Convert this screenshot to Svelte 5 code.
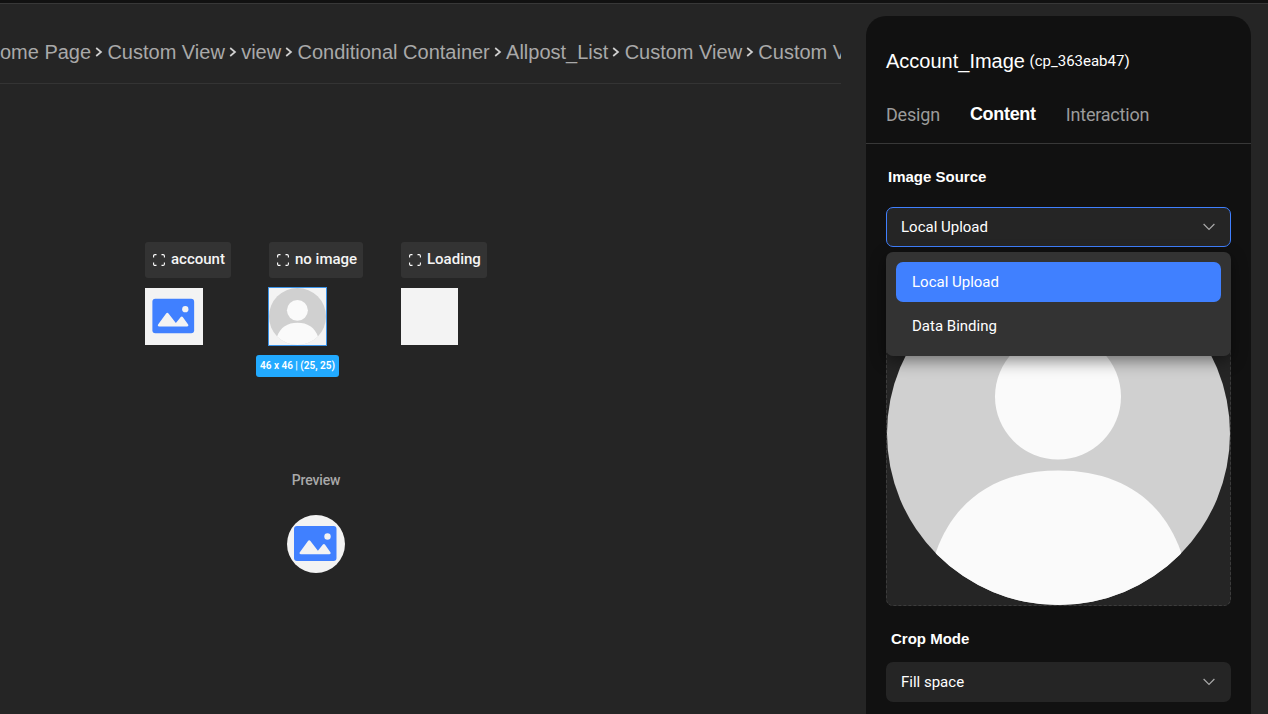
<script>
  const crumbs = ['Home Page', 'Custom View', 'view', 'Conditional Container', 'Allpost_List', 'Custom View', 'Custom View'];
  const variants = [
    { label: 'account', kind: 'picture', width: 86 },
    { label: 'no image', kind: 'avatar', width: 94 },
    { label: 'Loading', kind: 'blank', width: 86 }
  ];
  const options = ['Local Upload', 'Data Binding'];
  let source = $state('Local Upload');
</script>

{#snippet picture()}
  <svg class="art" viewBox="0 0 58 58">
    <rect x="7" y="11" width="42.5" height="35" rx="3" fill="#4080ff" />
    <path d="M14 39.2c-1.6 0-1.8-1.2-1-2.3l8-11c.7-.9 1.7-.9 2.4 0l7.5 9.8 5-6.1c.6-.7 1.4-.7 2 0l5.3 7.3c.8 1.1.5 2.3-1 2.3z" fill="#f3f3f3" />
    <circle cx="40.5" cy="21.5" r="3.2" fill="#f3f3f3" />
  </svg>
{/snippet}

{#snippet avatar(id)}
  <svg class="art" viewBox="0 0 343 343">
    <clipPath {id}><circle cx="171.5" cy="171.5" r="171.5" /></clipPath>
    <g clip-path="url(#{id})">
      <rect width="343" height="343" fill="#d0d0d0" />
      <circle cx="171" cy="134.5" r="63" fill="#fafafa" />
      <path d="M36 343L49 290C68 236 112 208.500 171.5 208.500S275 236 294 290L307 343z" fill="#fafafa" />
    </g>
  </svg>
{/snippet}

{#snippet chevron()}
  <svg class="chevron" width="12" height="8" viewBox="0 0 12 8" fill="none" stroke="#a8a8a8" stroke-width="1.2"><path d="M.6 1l5.4 5.5L11.400 1" /></svg>
{/snippet}

<div class="app">
  <div class="topbar"></div>
  <div class="workspace">
    <main>
      <nav>
        {#each crumbs as crumb, i}
          {#if i}
            <svg class="sep" width="8" height="10" viewBox="0 0 8 10" fill="none" stroke="#d0d0d0" stroke-width="1.700"><path d="M1.200 1L6 5 1.200 9" /></svg>
          {/if}
          <span>{crumb}</span>
        {/each}
      </nav>
      <div class="variants">
        {#each variants as v}
          <div class="variant">
            <div class="label" style="width: {v.width}px">
              <svg width="12" height="12" viewBox="0 0 12 12" fill="none" stroke="#fff" stroke-width="1.100"><path d="M.6 3.500V2Q.6.6 2 .6h1.500M8.500.6H10Q11.400.6 11.400 2v1.500M11.400 8.500V10q0 1.400-1.400 1.400H8.500M3.500 11.400H2Q.6 11.400.6 10V8.500" /></svg>
              <span>{v.label}</span>
            </div>
            <div class="thumb {v.kind}">
              {#if v.kind === 'picture'}{@render picture()}{/if}
              {#if v.kind === 'avatar'}
                {@render avatar('small')}
                <div class="size">46 x 46 | (25, 25)</div>
              {/if}
            </div>
          </div>
        {/each}
      </div>
      <div class="preview">
        <span>Preview</span>
        <div class="round">{@render picture()}</div>
      </div>
    </main>
    <aside>
      <h1>Account_Image <small>(cp_363eab47)</small></h1>
      <div class="tabs">
        <span>Design</span><span class="active">Content</span><span>Interaction</span>
      </div>
      <section>
        <h2>Image Source</h2>
        <div class="select open">
          <span>{source}</span>{@render chevron()}
          <div class="menu">
            {#each options as option}
              <button class:selected={option === source} onclick={() => (source = option)}>{option}</button>
            {/each}
          </div>
        </div>
        <div class="upload">{@render avatar('large')}</div>
        <h2 class="crop">Crop Mode</h2>
        <div class="select"><span>Fill space</span>{@render chevron()}</div>
      </section>
    </aside>
  </div>
</div>

<style>
  :global(body) { margin: 0; background: #252525; overflow: hidden; }
  * { box-sizing: border-box; }
  .app { width: 1268px; height: 714px; overflow: hidden; background: #252525; color: #fff; font-family: Roboto, sans-serif; display: flex; flex-direction: column; }
  .topbar { height: 4px; flex: none; background: #111; border-bottom: 1px solid #383838; }
  .workspace { flex: 1; min-height: 0; display: flex; }
  main { width: 841px; margin-right: 25px; flex: none; }
  nav { height: 80px; padding: 17px 0 0; border-bottom: 1px solid #343434; display: flex; align-items: center; overflow: hidden; white-space: nowrap; font: 20px/24px 'Liberation Sans', sans-serif; color: #a9a9a9; }
  nav span { flex: none; }
  nav span:first-child { margin-left: -14.500px; }
  .sep { flex: none; margin: 0 4.150px; }
  .variants { display: flex; gap: 38px; padding: 158px 0 0 145px; }
  .label { height: 36px; display: flex; align-items: center; gap: 6px; padding-left: 8px; border-radius: 3px; background: #333; font-size: 15px; font-weight: 500; white-space: nowrap; color: #f5f5f5; }
  .label svg { flex: none; }
  .label span { margin-top: -2px; }
  .thumb { margin-top: 10px; width: 58px; height: 57px; background: #f3f3f3; position: relative; }
  .blank { width: 57px; }
  .avatar { width: 57px; outline: 1px solid #3b93e8; }
  .art { display: block; width: 100%; height: 100%; }
  .size { position: absolute; top: 67px; left: -13px; width: 83px; height: 22px; border-radius: 3px; background: #22aaff; font-size: 10px; font-weight: 600; line-height: 22px; text-align: center; white-space: nowrap; }
  .preview { width: 58px; margin: 126px 0 0 287px; display: flex; flex-direction: column; align-items: center; gap: 26px; font-size: 14px; line-height: 18px; font-weight: 500; letter-spacing: -.150px; color: #a9a9a9; }
  .round { width: 58px; height: 58px; border-radius: 50%; background: #f3f3f3; }
  aside { width: 385px; margin-top: 12px; border-radius: 20px 20px 0 0; background: #111; flex: none; }
  h1 { margin: 0; padding: 33px 20px 0; height: 83px; font: 20px/24px 'Liberation Sans', sans-serif; }
  small { margin-left: -1px; font: 15px Roboto, sans-serif; vertical-align: 2px; }
  .tabs { display: flex; gap: 30px; height: 45px; padding: 5px 20px 0; border-bottom: 1px solid #383838; font-size: 18px; line-height: 22px; letter-spacing: -.200px; color: #9b9b9b; }
  .active { color: #fff; font: bold 18px/20px 'Liberation Sans', sans-serif; letter-spacing: -.300px; }
  section { padding: 0 20px; }
  h2 { margin: 0; padding: 24px 0 0 2px; height: 63px; font: bold 15px/18px 'Liberation Sans', sans-serif; }
  .select { position: relative; height: 40px; padding: 0 16px 0 15px; border-radius: 7px; background: #252525; display: flex; align-items: center; justify-content: space-between; font-size: 15px; }
  .chevron { flex: none; }
  .open { border: 1px solid #4080ff; padding: 0 15px 0 14px; }
  .menu { position: absolute; z-index: 1; top: 44px; left: -1px; width: 345px; height: 104px; padding: 10px; border-radius: 7px; background: #333; box-shadow: 0 5px 16px #0007; display: flex; flex-direction: column; gap: 4px; }
  button { height: 40px; flex: none; border: 0; border-radius: 7px; padding: 0 16px; background: none; color: #fff; font: 15px Roboto, sans-serif; text-align: left; }
  .selected { background: #4080ff; }
  .upload { height: 345px; margin-top: 14px; border: 1px dashed #3c3c3c; border-radius: 7px; background: #252525; }
  .crop { height: 56px; padding-left: 5px; }
</style>
